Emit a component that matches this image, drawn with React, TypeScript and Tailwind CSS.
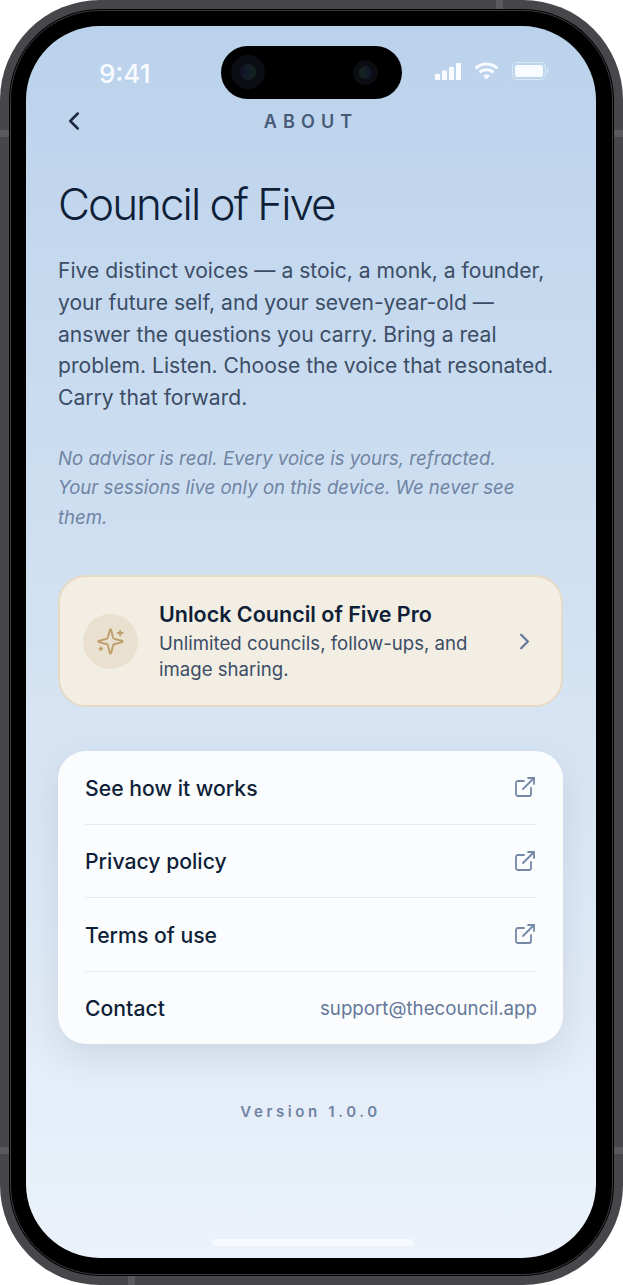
import { ChevronLeft, ChevronRight, ExternalLink } from 'lucide-react';

const links = ['See how it works', 'Privacy policy', 'Terms of use'];

function StatusIcons() {
  return (
    <div className="flex items-center gap-[13px] mb-[3px]">
      <svg width="26" height="17" viewBox="0 0 26 17" fill="#f8fbff">
        <rect x="0" y="11" width="5" height="6" rx="0.5" />
        <rect x="7" y="7.5" width="5" height="9.5" rx="0.5" />
        <rect x="14" y="4" width="5" height="13" rx="0.5" />
        <rect x="21" y="0" width="5" height="17" rx="0.5" />
      </svg>
      <svg width="25" height="18" viewBox="0 0 25 18" fill="none" stroke="#f8fbff" strokeWidth="3">
        <path d="M1.5 6.5a16 16 0 0 1 22 0" />
        <path d="M5.5 10.5a10.2 10.2 0 0 1 14 0" />
        <path d="M12.5 17.5 9 14a5 5 0 0 1 7 0z" fill="#f8fbff" stroke="none" />
      </svg>
      <svg width="37" height="18" viewBox="0 0 37 18" fill="none">
        <rect x="0.5" y="0.5" width="33" height="17" rx="4.5" stroke="#f8fbff" strokeOpacity="0.5" />
        <rect x="3" y="3" width="28" height="12" rx="2" fill="#f8fbff" />
        <path d="M35 6.5c1 .4 1.6 1.4 1.6 2.5s-.6 2.1-1.6 2.5z" fill="#f8fbff" fillOpacity="0.5" />
      </svg>
    </div>
  );
}

function SparkleIcon() {
  return (
    <svg width="29" height="29" viewBox="0 0 24 24" fill="none" stroke="#bf9f6b" strokeWidth="1.6" strokeLinecap="round" strokeLinejoin="round">
      <path d="M9.937 15.5A2 2 0 0 0 8.5 14.063l-6.135-1.582a.5.5 0 0 1 0-.962L8.5 9.936A2 2 0 0 0 9.937 8.5l1.582-6.135a.5.5 0 0 1 .963 0L14.063 8.5A2 2 0 0 0 15.5 9.937l6.135 1.581a.5.5 0 0 1 0 .964L15.5 14.063a2 2 0 0 0-1.437 1.437l-1.582 6.135a.5.5 0 0 1-.963 0z" />
      <path d="M20 3v4" />
      <path d="M22 5h-4" />
      <path d="M4 17v2" />
      <path d="M5 18H3" />
    </svg>
  );
}

export default function App() {
  return (
    <div className="relative w-[623px] h-[1285px] bg-white font-['Inter',sans-serif]">
      <div className="w-full h-full rounded-[100px] bg-[#47474b] p-[9px]">
        <div className="w-full h-full rounded-[91px] bg-black p-[1px]">
          <div className="w-full h-full rounded-[90px] border border-[#3c3c40] pt-[15px] pl-[15px] pr-[16px] pb-[16px]">
            <div className="relative flex flex-col w-full h-full rounded-[74px] overflow-hidden bg-gradient-to-b from-[#bbd2ec] via-[#d3e2f2] to-[#ebf2fb]">
              {/* Status bar */}
              <div className="flex items-center justify-between h-[94px] pl-[73px] pr-[47px] pb-[1px]">
                <span className="text-[26px] leading-none font-medium text-[#f8fbff] pt-[3px]">9:41</span>
                <StatusIcons />
              </div>

              {/* Header */}
              <div className="relative flex items-center justify-center h-[2px] pt-[2px]">
                <ChevronLeft className="absolute left-[33px] -mt-[2px] w-[30px] h-[30px] text-[#1e293b]" strokeWidth={2} />
                <span className="text-[18px] leading-none font-semibold tracking-[0.34em] text-[#475a78]">ABOUT</span>
              </div>

              <main className="flex flex-col pl-[32px] pr-[33px] pt-[56px]">
                <h1 className="text-[44px] leading-[52px] font-light tracking-[-0.045em] text-[#0f1f38]">Council of Five</h1>

                <p className="mt-[25px] text-[21.1px] leading-[31.8px] text-[#3c4d66]">
                  Five distinct voices — a stoic, a monk, a founder, your future self, and your seven-year-old — answer the questions you carry. Bring a real problem. Listen. Choose the voice that resonated. Carry that forward.
                </p>

                <p className="mt-[30px] text-[18.6px] leading-[29.5px] italic text-[#7084a3]">
                  No advisor is real. Every voice is yours, refracted.<br />
                  Your sessions live only on this device. We never see<br />
                  them.
                </p>

                {/* Pro card */}
                <div className="mt-[43px] flex items-center h-[132px] rounded-[28px] bg-[#f3eee3] border-2 border-[#e6dac4] pl-[23px] pr-[23px]">
                  <div className="flex items-center justify-center shrink-0 w-[55px] h-[55px] rounded-full bg-[#e9e0cf]">
                    <SparkleIcon />
                  </div>
                  <div className="ml-[21px] flex-1">
                    <div className="text-[21.5px] leading-[28px] font-semibold text-[#0f1f38]">Unlock Council of Five Pro</div>
                    <div className="mt-[2px] text-[18.6px] leading-[26.5px] text-[#3c4d66]">Unlimited councils, follow-ups, and image sharing.</div>
                  </div>
                  <ChevronRight className="ml-[20px] shrink-0 w-[27px] h-[27px] text-[#64789a]" strokeWidth={2} />
                </div>

                {/* Links */}
                <div className="mt-[44px] rounded-[28px] bg-[#fafcfe] pl-[27px] pr-[26px] shadow-[0_12px_36px_rgba(71,85,105,0.14)]">
                  {links.map((label) => (
                    <div key={label} className="flex items-center justify-between h-[73.4px] pt-[2px] border-b border-[#e7eaef]">
                      <span className="text-[21.2px] font-medium text-[#0f1f38]">{label}</span>
                      <ExternalLink className="w-[24px] h-[24px] mb-[3px] text-[#7488a6]" strokeWidth={1.8} />
                    </div>
                  ))}
                  <div className="flex items-center justify-between h-[72.8px] pt-[2px]">
                    <span className="text-[21.2px] font-medium text-[#0f1f38]">Contact</span>
                    <span className="text-[18.7px] text-[#64789a]">support@thecouncil.app</span>
                  </div>
                </div>

                <div className="mt-[58px] text-center text-[15px] leading-[20px] font-semibold tracking-[0.24em] text-[#7084a3]">Version 1.0.0</div>
              </main>

              {/* Home indicator */}
              <div className="mt-auto mb-[12px] ml-[186px] w-[202px] h-[7px] rounded-full bg-[#f6f9fd]" />

              {/* Dynamic island */}
              <div className="absolute left-[195px] top-[20px] w-[181px] h-[53px] rounded-full bg-black">
                <div className="absolute left-[10px] top-[9px] w-[34px] h-[34px] rounded-full bg-[#0b0d12] flex items-center justify-center">
                  <div className="w-[16px] h-[16px] rounded-full bg-gradient-to-r from-[#0f1528] to-[#152420]" />
                </div>
                <div className="absolute left-[132px] top-[14px] w-[25px] h-[25px] rounded-full bg-[#0b0d12] flex items-center justify-center">
                  <div className="w-[13px] h-[13px] rounded-full bg-gradient-to-r from-[#152420] to-[#0f1528]" />
                </div>
              </div>
            </div>
          </div>
        </div>
      </div>

      {/* Antenna bands */}
      <div className="absolute left-0 top-[130px] w-[9px] h-[7px] bg-[#5a5a5e]" />
      <div className="absolute right-0 top-[130px] w-[9px] h-[7px] bg-[#5a5a5e]" />
      <div className="absolute left-0 top-[1147px] w-[9px] h-[7px] bg-[#5a5a5e]" />
      <div className="absolute right-0 top-[1147px] w-[9px] h-[7px] bg-[#5a5a5e]" />
      <div className="absolute left-[496px] top-0 w-[7px] h-[9px] bg-[#5a5a5e]" />
      <div className="absolute left-[128px] bottom-0 w-[7px] h-[9px] bg-[#5a5a5e]" />
    </div>
  );
}
